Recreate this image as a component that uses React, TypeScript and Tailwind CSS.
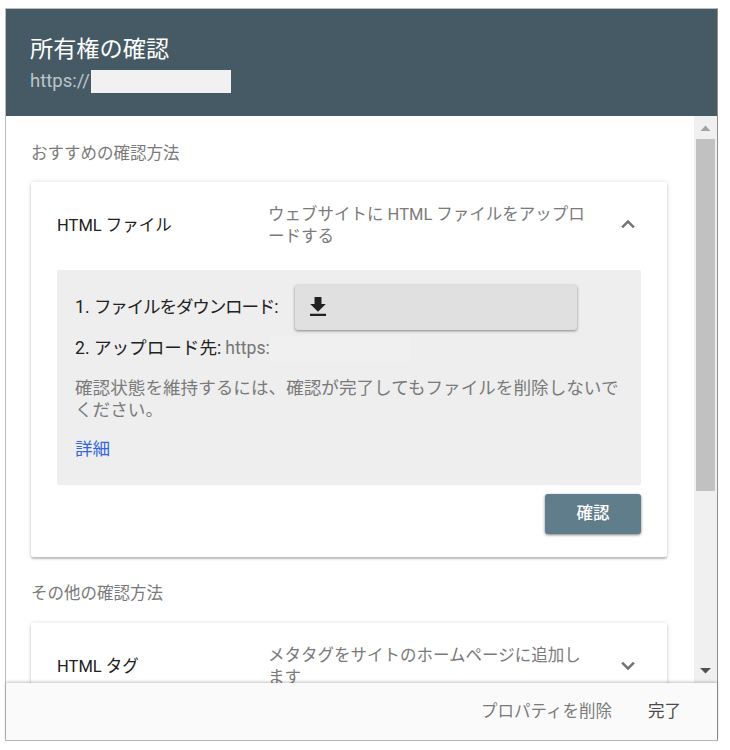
import { useState } from "react";
import type { ReactNode } from "react";

function Chevron({ up }: { up: boolean }) {
  return (
    <svg
      className={`h-[26px] w-[26px] fill-[#757575] stroke-[#757575] ${up ? "rotate-180" : ""}`}
      viewBox="0 0 24 24"
      strokeWidth="0.5"
      xmlns="http://www.w3.org/2000/svg"
    >
      <path d="M7.41 8.29L12 12.87l4.59-4.58L18 9.7l-6 6-6-6z" />
    </svg>
  );
}

type MethodCardProps = {
  title: string;
  description: string;
  open: boolean;
  onToggle: () => void;
  children?: ReactNode;
};

function MethodCard({ title, description, open, onToggle, children }: MethodCardProps) {
  return (
    <section className="rounded-[2px] bg-white px-[26px] shadow-[0_2px_2px_rgba(0,0,0,0.22),0_0_5px_rgba(0,0,0,0.13)]">
      <button onClick={onToggle} className="flex h-[88px] w-full items-center text-left">
        <span className="w-[211px] shrink-0 text-[16.5px] text-[#212121]">{title}</span>
        <span className="w-[322px] shrink-0 text-[16.5px] leading-[22px] break-all text-[#7a7a7a]">
          {description}
        </span>
        <span className={`ml-[25px] shrink-0 ${open ? "pb-[4px]" : "pb-[2px]"}`}>
          <Chevron up={open} />
        </span>
      </button>
      {open && children}
    </section>
  );
}

function Scrollbar() {
  return (
    <div className="flex w-[23px] shrink-0 flex-col items-center bg-[#f0f0f0]">
      <svg className="h-[23px] w-[23px] shrink-0 fill-[#a3a3a3]" viewBox="0 0 23 23">
        <path d="M6.5 15L11.5 9.5L16.5 15z" />
      </svg>
      <div className="h-[352px] w-[19px] shrink-0 bg-[#c1c1c1]" />
      <svg className="mt-auto h-[23px] w-[23px] shrink-0 fill-[#505050]" viewBox="0 0 23 23">
        <path d="M6 8L11.5 13.5L17 8z" />
      </svg>
    </div>
  );
}

export default function App() {
  const [openMethod, setOpenMethod] = useState("file");

  const toggle = (id: string) => setOpenMethod(openMethod === id ? "" : id);

  return (
    <main className="h-[750px] w-[730px] bg-white pt-[8px] pl-[5px] font-[Roboto,'Noto_Sans_CJK_JP',sans-serif]">
      <div className="flex h-[733px] w-[713px] flex-col border border-[#bdbdbd] border-r-[#8f8f8f]">
        <header className="h-[107px] shrink-0 bg-[#455a64] pt-[24px] pl-[24px]">
          <h1 className="text-[23.2px] leading-[32px] text-white">所有権の確認</h1>
          <div className="flex h-[33px] items-center text-[18.5px] text-[#bcc5ca]">
            <span className="w-[61px]">https://</span>
            <span className="h-[23px] w-[140px] bg-[#f1f1f1]" />
          </div>
        </header>

        <div className="flex min-h-0 flex-1 overflow-hidden">
          <div className="w-[688px] pt-[27px] pr-[27px] pl-[25px]">
            <h2 className="mb-[17px] text-[16.5px] leading-[22px] whitespace-nowrap text-[#7a7a7a]">
              おすすめの確認方法
            </h2>
            <MethodCard
              title="HTML ファイル"
              description="ウェブサイトに HTML ファイルをアップロードする"
              open={openMethod === "file"}
              onToggle={() => toggle("file")}
            >
              <div className="h-[215px] rounded-[2px] bg-[#eeeeee] px-[18px] pt-[14px] text-[17.6px] text-[#212121]">
                <div className="flex h-[46px] items-center whitespace-nowrap">
                  <span className="w-[220px] shrink-0">
                    1. <span className="tracking-[-1.2px]">ファイルをダウンロード</span>:
                  </span>
                  <button className="flex h-[45px] w-[282px] shrink-0 items-center rounded-[3px] bg-[#e0e0e0] pl-[10px] shadow-[0_1px_3px_rgba(0,0,0,0.45)]">
                    <svg className="h-[26px] w-[26px] fill-[#212121]" viewBox="0 0 24 24">
                      <path d="M19.2 9.2h-4V2.8H8.8v6.4H4.8l7.2 7.2 7.2-7.2zM4.6 18.2v2h14.8v-2H4.6z" />
                    </svg>
                  </button>
                </div>
                <div className="mt-[5px] flex h-[26px] items-center whitespace-nowrap">
                  <span>2. アップロード先:</span>
                  <span className="ml-[4px] text-[#757575]">https:</span>
                  <span className="h-[25px] w-[141px] bg-[#f0f0f0]" />
                </div>
                <p className="mt-[16px] w-[550px] leading-[22px] break-all text-[#7a7a7a]">
                  確認状態を維持するには、確認が完了してもファイルを削除しないでください。
                </p>
                <a href="#" className="mt-[16px] inline-block leading-[24px] text-[#3367e0]">
                  詳細
                </a>
              </div>
              <div className="flex justify-end pt-[9px] pb-[23px]">
                <button className="h-[40px] w-[96px] rounded-[3px] bg-[#607d8b] pt-[1px] text-[16.5px] font-medium text-white shadow-[0_1px_3px_rgba(0,0,0,0.5)]">
                  確認
                </button>
              </div>
            </MethodCard>

            <h2 className="mt-[26px] mb-[18px] text-[16.5px] leading-[22px] text-[#7a7a7a]">
              その他の確認方法
            </h2>
            <MethodCard
              title="HTML タグ"
              description="メタタグをサイトのホームページに追加します"
              open={openMethod === "tag"}
              onToggle={() => toggle("tag")}
            />
          </div>
          <Scrollbar />
        </div>

        <footer className="relative flex h-[57px] shrink-0 items-center justify-end bg-[#fafafa] pt-[1px] pr-[36px] text-[16.5px] shadow-[0_-1px_3px_rgba(0,0,0,0.24)]">
          <button className="text-[#7a7a7a]">プロパティを削除</button>
          <button className="ml-[36px] text-[#4a4a4a]">完了</button>
        </footer>
      </div>
    </main>
  );
}
